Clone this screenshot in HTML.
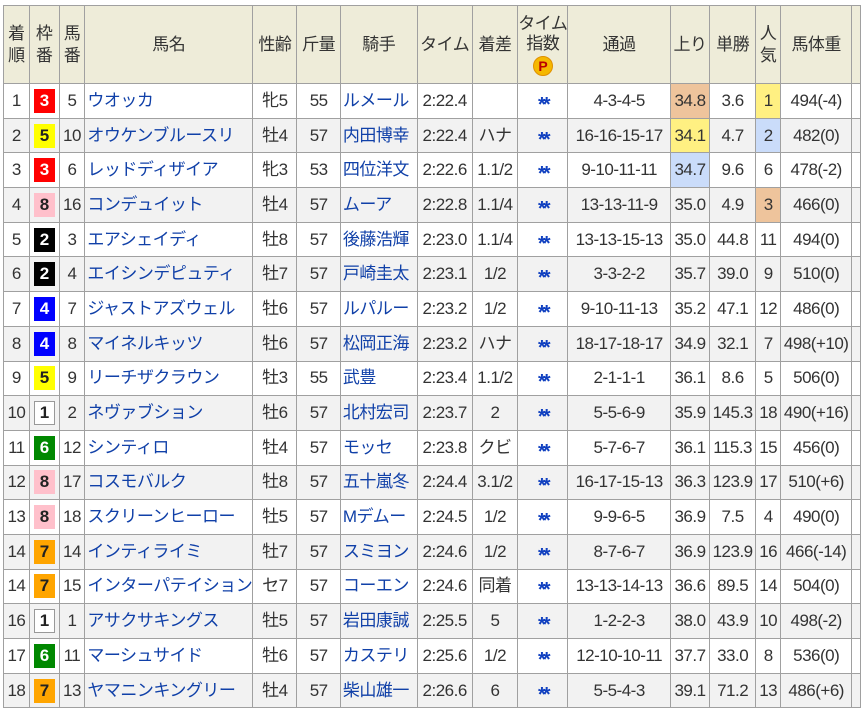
<!DOCTYPE html>
<html><head><meta charset="utf-8"><style>
html,body{margin:0;padding:0;background:#fff;width:861px;height:710px;overflow:hidden}
table{position:absolute;left:3px;top:5px;border-collapse:collapse;table-layout:fixed;font-family:"Liberation Sans","Noto Sans CJK JP",sans-serif;font-size:17px;color:#333;letter-spacing:-0.5px}
td,th{border:1px solid #a0a0a0;padding:0;text-align:center;white-space:nowrap;overflow:hidden;font-weight:normal;line-height:20px;vertical-align:middle}
th{background:#eeecd9;height:77px;line-height:22px;color:#333}
tr.r td{height:33.7px}
tr.g td{background:#f2f2f2}
td.l{text-align:left;color:#1040a8;padding-left:2px}
td.j{text-align:left;color:#1040a8;padding-left:2px}
.f{display:inline-block;width:21px;height:24px;line-height:24px;font-weight:bold;font-size:17px;vertical-align:middle}
.c1{background:#fff;border:1px solid #999;width:19px;height:22px;line-height:22px;color:#222}
.c2{background:#000;color:#fff}.c3{background:#f00;color:#fff}.c4{background:#00f;color:#fff}
.c5{background:#ff0;color:#222}.c6{background:#080;color:#fff}.c7{background:#ffa500;color:#222}.c8{background:#ffc0cb;color:#222}
.s{color:#1040c0;font-weight:bold;font-size:20px;letter-spacing:-3px;font-family:"Liberation Sans",sans-serif}
.s span{position:relative;top:4px}
.a{background:#eec49c!important}.y{background:#fff082!important}.b{background:#cadcfa!important}
.p{display:inline-block;width:20px;height:20px;border-radius:50%;background:#f5b800;border:1px solid #e09000;color:#b00;font-weight:bold;font-size:14px;line-height:18px;box-sizing:border-box;margin-top:2px}
</style></head><body>
<table>
<colgroup><col style="width:27px"><col style="width:31px"><col style="width:27px"><col style="width:160px"><col style="width:46px"><col style="width:45px"><col style="width:78px"><col style="width:56px"><col style="width:47px"><col style="width:45px"><col style="width:105px"><col style="width:40px"><col style="width:47px"><col style="width:26px"><col style="width:72px"><col style="width:10px"></colgroup>
<tr><th>着<br>順</th><th>枠<br>番</th><th>馬<br>番</th><th>馬名</th><th>性齢</th><th>斤量</th><th>騎手</th><th>タイム</th><th>着差</th><th style="line-height:20px">タイム<br>指数<br><span class="p">P</span></th><th>通過</th><th>上り</th><th>単勝</th><th>人<br>気</th><th>馬体重</th><th></th></tr>
<tr class="r"><td>1</td><td><span class="f c3">3</span></td><td>5</td><td class="l">ウオッカ</td><td>牝5</td><td>55</td><td class="j">ルメール</td><td>2:22.4</td><td></td><td class="s"><span>**</span></td><td>4-3-4-5</td><td class="a">34.8</td><td>3.6</td><td class="y">1</td><td>494(-4)</td><td></td></tr>
<tr class="r g"><td>2</td><td><span class="f c5">5</span></td><td>10</td><td class="l">オウケンブルースリ</td><td>牡4</td><td>57</td><td class="j">内田博幸</td><td>2:22.4</td><td>ハナ</td><td class="s"><span>**</span></td><td>16-16-15-17</td><td class="y">34.1</td><td>4.7</td><td class="b">2</td><td>482(0)</td><td></td></tr>
<tr class="r"><td>3</td><td><span class="f c3">3</span></td><td>6</td><td class="l">レッドディザイア</td><td>牝3</td><td>53</td><td class="j">四位洋文</td><td>2:22.6</td><td>1.1/2</td><td class="s"><span>**</span></td><td>9-10-11-11</td><td class="b">34.7</td><td>9.6</td><td>6</td><td>478(-2)</td><td></td></tr>
<tr class="r g"><td>4</td><td><span class="f c8">8</span></td><td>16</td><td class="l">コンデュイット</td><td>牡4</td><td>57</td><td class="j">ムーア</td><td>2:22.8</td><td>1.1/4</td><td class="s"><span>**</span></td><td>13-13-11-9</td><td>35.0</td><td>4.9</td><td class="a">3</td><td>466(0)</td><td></td></tr>
<tr class="r"><td>5</td><td><span class="f c2">2</span></td><td>3</td><td class="l">エアシェイディ</td><td>牡8</td><td>57</td><td class="j">後藤浩輝</td><td>2:23.0</td><td>1.1/4</td><td class="s"><span>**</span></td><td>13-13-15-13</td><td>35.0</td><td>44.8</td><td>11</td><td>494(0)</td><td></td></tr>
<tr class="r g"><td>6</td><td><span class="f c2">2</span></td><td>4</td><td class="l">エイシンデピュティ</td><td>牡7</td><td>57</td><td class="j">戸崎圭太</td><td>2:23.1</td><td>1/2</td><td class="s"><span>**</span></td><td>3-3-2-2</td><td>35.7</td><td>39.0</td><td>9</td><td>510(0)</td><td></td></tr>
<tr class="r"><td>7</td><td><span class="f c4">4</span></td><td>7</td><td class="l">ジャストアズウェル</td><td>牡6</td><td>57</td><td class="j">ルパルー</td><td>2:23.2</td><td>1/2</td><td class="s"><span>**</span></td><td>9-10-11-13</td><td>35.2</td><td>47.1</td><td>12</td><td>486(0)</td><td></td></tr>
<tr class="r g"><td>8</td><td><span class="f c4">4</span></td><td>8</td><td class="l">マイネルキッツ</td><td>牡6</td><td>57</td><td class="j">松岡正海</td><td>2:23.2</td><td>ハナ</td><td class="s"><span>**</span></td><td>18-17-18-17</td><td>34.9</td><td>32.1</td><td>7</td><td>498(+10)</td><td></td></tr>
<tr class="r"><td>9</td><td><span class="f c5">5</span></td><td>9</td><td class="l">リーチザクラウン</td><td>牡3</td><td>55</td><td class="j">武豊</td><td>2:23.4</td><td>1.1/2</td><td class="s"><span>**</span></td><td>2-1-1-1</td><td>36.1</td><td>8.6</td><td>5</td><td>506(0)</td><td></td></tr>
<tr class="r g"><td>10</td><td><span class="f c1">1</span></td><td>2</td><td class="l">ネヴァブション</td><td>牡6</td><td>57</td><td class="j">北村宏司</td><td>2:23.7</td><td>2</td><td class="s"><span>**</span></td><td>5-5-6-9</td><td>35.9</td><td>145.3</td><td>18</td><td>490(+16)</td><td></td></tr>
<tr class="r"><td>11</td><td><span class="f c6">6</span></td><td>12</td><td class="l">シンティロ</td><td>牡4</td><td>57</td><td class="j">モッセ</td><td>2:23.8</td><td>クビ</td><td class="s"><span>**</span></td><td>5-7-6-7</td><td>36.1</td><td>115.3</td><td>15</td><td>456(0)</td><td></td></tr>
<tr class="r g"><td>12</td><td><span class="f c8">8</span></td><td>17</td><td class="l">コスモバルク</td><td>牡8</td><td>57</td><td class="j">五十嵐冬</td><td>2:24.4</td><td>3.1/2</td><td class="s"><span>**</span></td><td>16-17-15-13</td><td>36.3</td><td>123.9</td><td>17</td><td>510(+6)</td><td></td></tr>
<tr class="r"><td>13</td><td><span class="f c8">8</span></td><td>18</td><td class="l">スクリーンヒーロー</td><td>牡5</td><td>57</td><td class="j">Mデムー</td><td>2:24.5</td><td>1/2</td><td class="s"><span>**</span></td><td>9-9-6-5</td><td>36.9</td><td>7.5</td><td>4</td><td>490(0)</td><td></td></tr>
<tr class="r g"><td>14</td><td><span class="f c7">7</span></td><td>14</td><td class="l">インティライミ</td><td>牡7</td><td>57</td><td class="j">スミヨン</td><td>2:24.6</td><td>1/2</td><td class="s"><span>**</span></td><td>8-7-6-7</td><td>36.9</td><td>123.9</td><td>16</td><td>466(-14)</td><td></td></tr>
<tr class="r"><td>14</td><td><span class="f c7">7</span></td><td>15</td><td class="l">インターパテイション</td><td>セ7</td><td>57</td><td class="j">コーエン</td><td>2:24.6</td><td>同着</td><td class="s"><span>**</span></td><td>13-13-14-13</td><td>36.6</td><td>89.5</td><td>14</td><td>504(0)</td><td></td></tr>
<tr class="r g"><td>16</td><td><span class="f c1">1</span></td><td>1</td><td class="l">アサクサキングス</td><td>牡5</td><td>57</td><td class="j">岩田康誠</td><td>2:25.5</td><td>5</td><td class="s"><span>**</span></td><td>1-2-2-3</td><td>38.0</td><td>43.9</td><td>10</td><td>498(-2)</td><td></td></tr>
<tr class="r"><td>17</td><td><span class="f c6">6</span></td><td>11</td><td class="l">マーシュサイド</td><td>牡6</td><td>57</td><td class="j">カステリ</td><td>2:25.6</td><td>1/2</td><td class="s"><span>**</span></td><td>12-10-10-11</td><td>37.7</td><td>33.0</td><td>8</td><td>536(0)</td><td></td></tr>
<tr class="r g"><td>18</td><td><span class="f c7">7</span></td><td>13</td><td class="l">ヤマニンキングリー</td><td>牡4</td><td>57</td><td class="j">柴山雄一</td><td>2:26.6</td><td>6</td><td class="s"><span>**</span></td><td>5-5-4-3</td><td>39.1</td><td>71.2</td><td>13</td><td>486(+6)</td><td></td></tr>
</table>
</body></html>
